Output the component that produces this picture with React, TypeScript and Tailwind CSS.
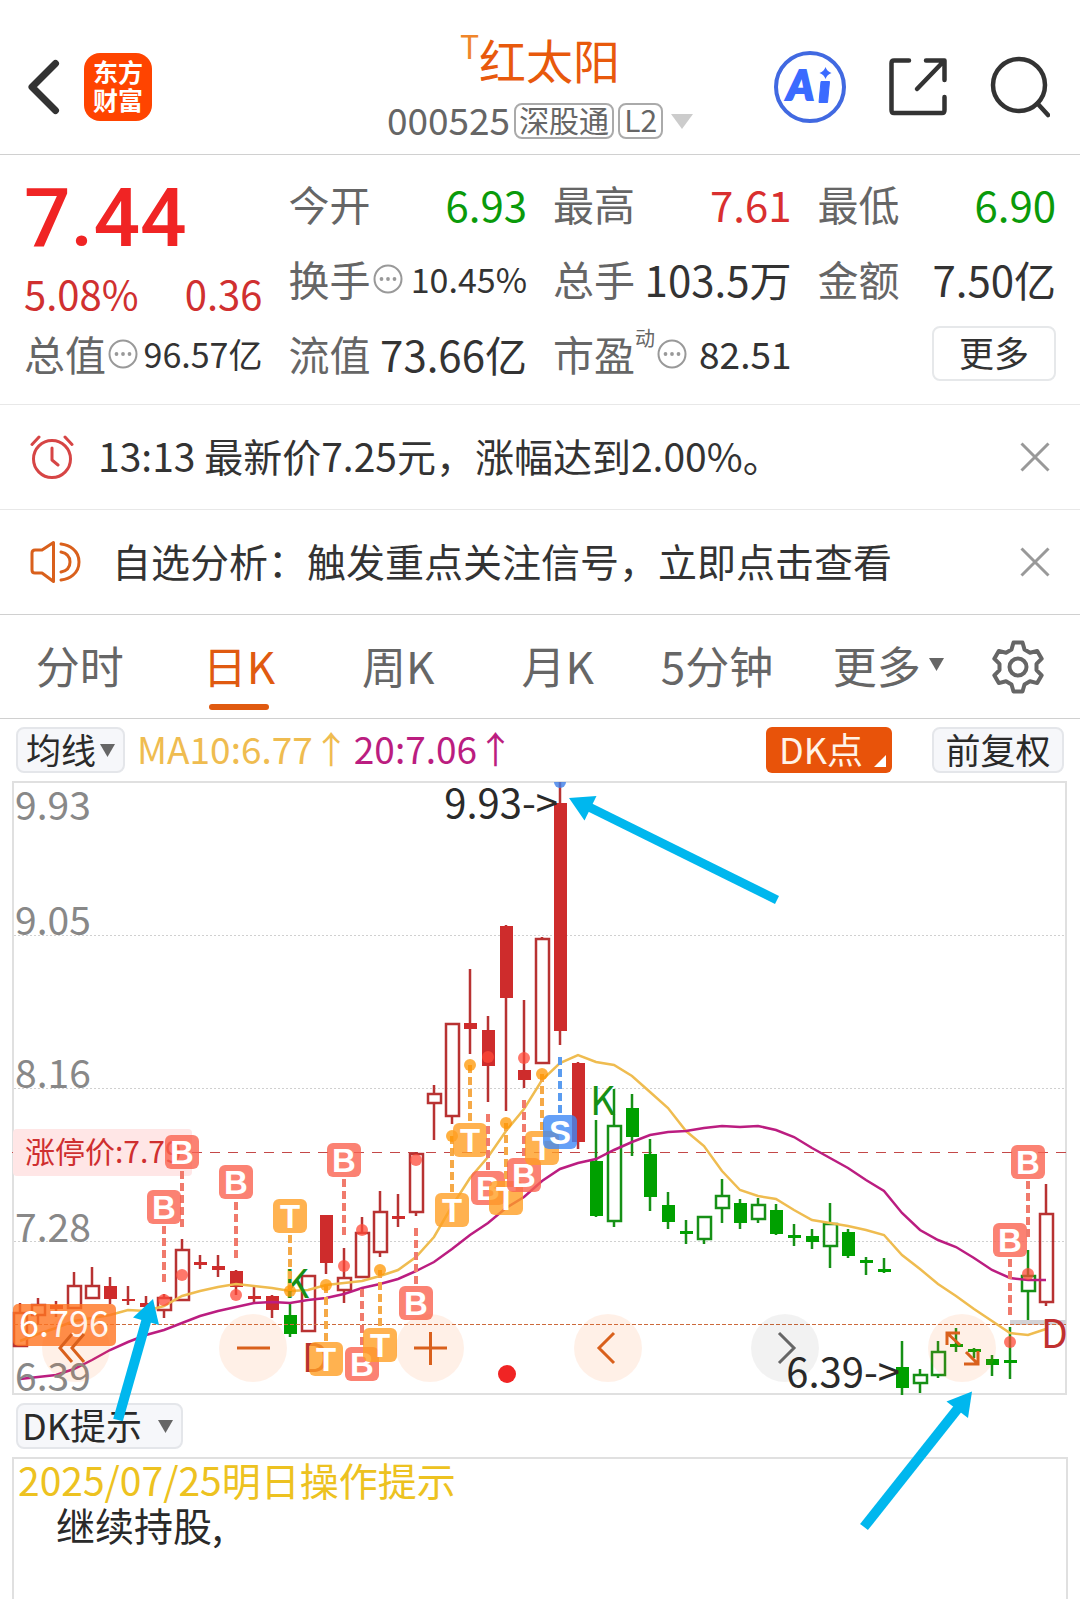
import React, { useState } from "react";

type Candle = [kind: string, high: number, top: number, bottom: number, low: number];

// kind: r/g = red or green body, R/G = hollow body
const candles: Candle[] = [
  ["R", 1303, 1312, 1346, 1347], ["R", 1298, 1304, 1315, 1325], ["r", 1301, 1305, 1309, 1317],
  ["R", 1272, 1285, 1308, 1308], ["R", 1267, 1285, 1298, 1298], ["r", 1277, 1286, 1299, 1304],
  ["r", 1286, 1299, 1301, 1305], ["r", 1296, 1303, 1307, 1311], ["R", 1294, 1297, 1310, 1318],
  ["R", 1239, 1249, 1300, 1301], ["r", 1255, 1262, 1265, 1269], ["r", 1255, 1266, 1270, 1277],
  ["r", 1270, 1271, 1287, 1295], ["r", 1287, 1296, 1299, 1303], ["r", 1295, 1296, 1310, 1318],
  ["g", 1304, 1315, 1334, 1337], ["R", 1275, 1275, 1331, 1331], ["r", 1215, 1215, 1263, 1274],
  ["R", 1248, 1277, 1290, 1303], ["R", 1217, 1232, 1277, 1277], ["R", 1191, 1211, 1252, 1257],
  ["r", 1194, 1216, 1219, 1227], ["R", 1152, 1153, 1212, 1216], ["R", 1085, 1093, 1103, 1140],
  ["R", 1023, 1023, 1116, 1124], ["r", 969, 1023, 1029, 1054], ["r", 1016, 1030, 1066, 1102],
  ["r", 925, 926, 998, 1111], ["r", 1000, 1070, 1080, 1088], ["R", 937, 938, 1063, 1063],
  ["r", 782, 803, 1031, 1045], ["r", 1062, 1063, 1142, 1149], ["g", 1120, 1161, 1216, 1217],
  ["G", 1089, 1125, 1221, 1227], ["g", 1094, 1108, 1137, 1156], ["g", 1139, 1154, 1197, 1211],
  ["g", 1192, 1205, 1222, 1229], ["g", 1220, 1231, 1234, 1244], ["G", 1216, 1216, 1239, 1244],
  ["G", 1179, 1195, 1208, 1223], ["g", 1199, 1203, 1223, 1229], ["G", 1198, 1204, 1219, 1223],
  ["g", 1204, 1210, 1234, 1235], ["g", 1224, 1235, 1238, 1246], ["g", 1229, 1236, 1242, 1249],
  ["G", 1203, 1223, 1246, 1268], ["g", 1229, 1232, 1256, 1258], ["g", 1257, 1260, 1263, 1275],
  ["g", 1258, 1269, 1272, 1273], ["g", 1341, 1367, 1388, 1395], ["G", 1369, 1374, 1383, 1393],
  ["G", 1341, 1351, 1375, 1378], ["g", 1328, 1344, 1347, 1352], ["g", 1348, 1349, 1352, 1358],
  ["g", 1355, 1359, 1365, 1376], ["g", 1327, 1360, 1363, 1379], ["G", 1250, 1275, 1291, 1320],
  ["R", 1184, 1213, 1302, 1306],
];

const ma10 = [
  1341, 1334, 1328, 1321, 1318, 1315, 1310, 1311, 1306, 1296, 1291, 1287, 1284, 1286, 1288, 1291, 1290, 1285, 1283,
  1281, 1276, 1270, 1257, 1237, 1206, 1178, 1157, 1131, 1109, 1080, 1063, 1055, 1062, 1065, 1076, 1092, 1108, 1131,
  1146, 1171, 1190, 1196, 1199, 1210, 1220, 1223, 1226, 1230, 1235, 1255, 1269, 1284, 1296, 1309, 1321, 1333, 1335, 1329,
];

const ma20 = [
  1379, 1377, 1375, 1369, 1360, 1350, 1342, 1335, 1330, 1323, 1316, 1311, 1307, 1303, 1302, 1303, 1300, 1298, 1294,
  1288, 1284, 1279, 1271, 1262, 1249, 1235, 1223, 1208, 1197, 1181, 1169, 1163, 1159, 1150, 1142, 1135, 1132, 1131,
  1128, 1126, 1127, 1126, 1130, 1137, 1148, 1158, 1168, 1180, 1191, 1213, 1230, 1240, 1247, 1258, 1270, 1278, 1280, 1280,
];

// B = buy, T = T+0 trade, S = sell
const signals = [
  { type: "B", x: 182, y: 1152, from: 1171, dot: 1275 },
  { type: "B", x: 164, y: 1207, from: 1226, dot: 1300 },
  { type: "B", x: 236, y: 1182, from: 1202, dot: 1295 },
  { type: "T", x: 290, y: 1216, from: 1235, dot: 1291 },
  { type: "B", x: 344, y: 1160, from: 1179, dot: 1266 },
  { type: "T", x: 326, y: 1359, from: 1285, dot: 1285 },
  { type: "B", x: 362, y: 1364, from: 1289, dot: 1230 },
  { type: "T", x: 380, y: 1345, from: 1270, dot: 1270 },
  { type: "B", x: 416, y: 1303, from: 1228, dot: 1160 },
  { type: "T", x: 452, y: 1210, from: 1136, dot: 1136 },
  { type: "T", x: 470, y: 1140, from: 1065, dot: 1065 },
  { type: "B", x: 488, y: 1188, from: 1114, dot: 1057 },
  { type: "T", x: 506, y: 1198, from: 1123, dot: 1123 },
  { type: "B", x: 524, y: 1175, from: 1100, dot: 1058 },
  { type: "T", x: 542, y: 1148, from: 1074, dot: 1074 },
  { type: "S", x: 560, y: 1132, from: 1057, dot: 782 },
  { type: "B", x: 1010, y: 1240, from: 1259, dot: 1342 },
  { type: "B", x: 1028, y: 1162, from: 1181, dot: 1274 },
];

const signalColors: Record<string, { box: string; line: string; dot: string }> = {
  B: { box: "#fa6350", line: "#f07a6c", dot: "#ff4a38" },
  T: { box: "#ff9f24", line: "#f5a947", dot: "#ff9500" },
  S: { box: "#3f88f5", line: "#5a9cf0", dot: "#3d7ee8" },
};

const xAt = (i: number) => 20 + i * 18;
const toPoints = (ys: number[]) => ys.map((y, i) => `${xAt(i)},${y}`).join(" ");

const periods = ["分时", "日K", "周K", "月K", "5分钟"];

const Dots = () => (
  <svg width="30" height="30" viewBox="0 0 30 30" className="ml-[2px] shrink-0">
    <circle cx="15" cy="15" r="13.5" fill="none" stroke="#999" strokeWidth="2" />
    <circle cx="8.5" cy="15" r="1.9" fill="#999" />
    <circle cx="15" cy="15" r="1.9" fill="#999" />
    <circle cx="21.5" cy="15" r="1.9" fill="#999" />
  </svg>
);

const Caret = ({ color = "#666" }: { color?: string }) => (
  <svg width="15" height="13" viewBox="0 0 15 13" className="shrink-0">
    <path d="M0 0h15L7.5 13z" fill={color} />
  </svg>
);

const CloseIcon = () => (
  <svg width="30" height="30" viewBox="0 0 30 30" fill="none" stroke="#999" strokeWidth="3">
    <path d="M1.5 1.5l27 27M28.5 1.5l-27 27" />
  </svg>
);

interface QuoteProps {
  label: string;
  value: string;
  color?: string;
  size?: string;
  info?: boolean;
  sup?: string;
}

const Quote = ({ label, value, color = "text-[#333]", size = "text-[42px]", info, sup }: QuoteProps) => (
  <div className="flex h-[75px] items-center justify-between whitespace-nowrap">
    <span className="flex items-center text-[41px] text-[#666]">
      {label}
      {sup && <sup className="-top-4 text-[20px] leading-none">{sup}</sup>}
      {info && <Dots />}
    </span>
    <span className={`${size} ${color}`}>{value}</span>
  </div>
);

const Header = () => (
  <header className="grid h-[155px] grid-cols-[1fr_auto_1fr] items-center border-b border-[#d0d0d0] px-7 pt-5">
    <div className="flex items-center gap-6">
      <button type="button" aria-label="返回">
        <svg width="32" height="56" viewBox="0 0 32 56" fill="none" stroke="#333" strokeWidth="7" strokeLinecap="round" strokeLinejoin="round">
          <path d="M27.500 4.500L4 28l23.500 23.500" />
        </svg>
      </button>
      <a href="#" className="flex size-[68px] flex-col items-center justify-center rounded-2xl bg-[#ff4400] pb-1 text-[25px] leading-7 font-bold text-white">
        <span>东方</span>
        <span>财富</span>
      </a>
    </div>

    <div className="flex flex-col items-center gap-1 pt-2 text-[#666]">
      <h1 className="flex text-[47px] leading-[56px] text-[#e8590c]">
        <span className="text-[32px] leading-7 text-[#f0862a]">T</span>
        红太阳
      </h1>
      <div className="flex items-center gap-1 text-[37px] leading-[56px]">
        <span className="pb-1">000525</span>
        <span className="rounded-lg border-2 border-[#aaa] px-[3px] pb-1 text-[30px] leading-7">深股通</span>
        <span className="rounded-lg border-2 border-[#aaa] px-1 pb-1 text-[30px] leading-7">L2</span>
        <svg width="22" height="15" viewBox="0 0 22 15" className="ml-1">
          <path d="M0 0h22L11 15z" fill="#ccc" />
        </svg>
      </div>
    </div>

    <div className="flex items-center justify-end gap-[42px] pr-[2px]">
      <button type="button" aria-label="AI">
        <svg width="72" height="72" viewBox="0 0 72 72">
          <circle cx="36" cy="36" r="34" fill="none" stroke="#4169e1" strokeWidth="4" />
          <text x="13" y="49" fontSize="41" fontWeight="900" fontStyle="italic" fill="#3b6bff" stroke="#3b6bff" strokeWidth="2" style={{ fontFamily: "Lato" }}>
            A
          </text>
          <path d="M47 30.500h8.500l-2 21h-8.500z" fill="#3b6bff" stroke="#3b6bff" strokeWidth="1" strokeLinejoin="round" />
          <path d="M51.500 16q1.500 4.500 6 6-4.500 1.500-6 6-1.500-4.500-6-6 4.500-1.500 6-6z" fill="#3b6bff" />
        </svg>
      </button>
      <button type="button" aria-label="分享">
        <svg width="60" height="60" viewBox="0 0 60 60" fill="none" stroke="#333" strokeWidth="4.500" strokeLinecap="round" strokeLinejoin="round">
          <path d="M21 3.500H6Q3.500 3.500 3.500 6v47q0 3 2.500 3h48q2.500 0 2.500-3V40M38 3.500h18.500V23M55 5L29 32" />
        </svg>
      </button>
      <button type="button" aria-label="搜索">
        <svg width="60" height="62" viewBox="0 0 60 62" fill="none" stroke="#333" strokeWidth="4.500" strokeLinecap="round">
          <circle cx="29" cy="29" r="26" />
          <path d="M47.500 47.500L58 59" />
        </svg>
      </button>
    </div>
  </header>
);

const QuotePanel = () => (
  <section className="grid grid-cols-4 gap-x-[26px] border-b border-[#e8e8e8] px-6 pt-[11px] pb-[13px]">
    <div>
      <div className="font-[Roboto,sans-serif] text-[82px] leading-[104px] font-medium text-[#f02424]">7.44</div>
      <div className="flex justify-between text-[40px] leading-[46px] text-[#d03030]">
        <span>5.08%</span>
        <span>0.36</span>
      </div>
      <Quote label="总值" value="96.57亿" size="text-[34px]" info />
    </div>
    <div>
      <Quote label="今开" value="6.93" color="text-[#0a9a0a]" />
      <Quote label="换手" value="10.45%" size="text-[34px]" info />
      <Quote label="流值" value="73.66亿" />
    </div>
    <div>
      <Quote label="最高" value="7.61" color="text-[#d92f2f]" />
      <Quote label="总手" value="103.5万" />
      <Quote label="市盈" value="82.51" size="text-[37px]" info sup="动" />
    </div>
    <div>
      <Quote label="最低" value="6.90" color="text-[#0a9a0a]" />
      <Quote label="金额" value="7.50亿" />
      <div className="flex h-[75px] items-center justify-end">
        <button type="button" className="h-[55px] w-[124px] rounded-lg border-2 border-[#e6e8ea] pb-1 text-[35px] leading-none text-[#333]">
          更多
        </button>
      </div>
    </div>
  </section>
);

const AlarmIcon = () => (
  <svg width="44" height="44" viewBox="0 0 44 44" fill="none" stroke="#d64545" strokeWidth="3" strokeLinecap="round" strokeLinejoin="round">
    <circle cx="22" cy="24" r="18.500" />
    <path d="M22 13v12l6 5M2 9.500L9 2M42 9.500L35 2" />
  </svg>
);

const SpeakerIcon = () => (
  <svg width="52" height="44" viewBox="0 0 52 44" fill="none" stroke="#d9601c" strokeWidth="3" strokeLinecap="round" strokeLinejoin="round">
    <path d="M23.500 2.500v39L12 33H5q-3 0-3-3V13q0-3 3-3h7zM31 4c8 1 18 6 18 18s-10 17-18 18M31 12c5 1 9 4 9 10s-4 9-9 10" />
  </svg>
);

const CandleChart = () => (
  <svg viewBox="12 781 1056 614" className="pointer-events-none relative z-10 block h-auto w-full overflow-visible">
    <rect x="13" y="782" width="1053" height="612" fill="none" stroke="#e0e0e0" strokeWidth="2" />

    {/* Grid */}
    {[935, 1088, 1241].map((y) => (
      <line key={y} x1="14" x2="1065" y1={y + 0.5} y2={y + 0.5} stroke="#d0d0d0" strokeDasharray="2 2" />
    ))}

    {/* Limit-up price */}
    <line x1="12" x2="1066" y1="1152.5" y2="1152.5" stroke="#c44848" strokeDasharray="10 8" />
    <rect x="13" y="1129" width="179" height="47" rx="4" fill="#ffe6e6" />
    <text x="25" y="1163" fontSize="30" fill="#cf2f2f">涨停价:7.79</text>

    {/* Candles */}
    {candles.map(([kind, high, top, bottom, low], i) => {
      const x = xAt(i);
      const isRed = kind.toLowerCase() === "r";
      const hollow = kind === kind.toUpperCase();
      const line = isRed ? "#b83232" : "#169016";
      return (
        <g key={i} stroke={line} strokeWidth="2.500">
          <path d={`M${x} ${high}V${top}M${x} ${bottom}V${low}`} />
          {hollow ? (
            <rect x={x - 6} y={top + 1} width="13" height={bottom - top - 1} fill="none" />
          ) : (
            <rect x={x - 6} y={top} width="13" height={bottom - top} fill={isRed ? "#ce2c2c" : "#00a000"} stroke="none" />
          )}
        </g>
      );
    })}

    <rect x="1010" y="1320" width="56" height="5" fill="#d2d2d6" />
    <line x1="14" x2="1066" y1="1324.5" y2="1324.5" stroke="#cc6a3c" strokeDasharray="4 2" />

    <polyline points={toPoints(ma10)} fill="none" stroke="#efbc50" strokeWidth="2.500" />
    <polyline points={toPoints(ma20)} fill="none" stroke="#bb1d80" strokeWidth="2.500" />

    {/* DK marks */}
    <g fontSize="39">
      <text x="590" y="1115" fill="#169016">K</text>
      <text x="284" y="1298" fill="#169016">K</text>
      <text x="302" y="1372" fill="#b83232">D</text>
      <text x="1041" y="1348" fill="#c03030">D</text>
    </g>

    {/* Trade signals */}
    {signals.map((s) => (
      <g key={s.x}>
        <line x1={s.x} x2={s.x} y1={s.from} y2={s.from + 56} stroke={signalColors[s.type].line} strokeWidth="4" strokeDasharray="8 4" />
        {s.type === "S" ? (
          <path d={`M${s.x - 6} 782h12a6 6 0 0 1-12 0z`} fill={signalColors.S.dot} opacity="0.8" />
        ) : (
          <circle cx={s.x} cy={s.dot} r="6" fill={signalColors[s.type].dot} opacity="0.75" />
        )}
        <rect x={s.x - 17} y={s.y - 17} width="34" height="34" rx="6" fill={signalColors[s.type].box} opacity="0.8" />
        <text x={s.x} y={s.y + 12} fontSize="33" fontWeight="700" textAnchor="middle" fill="#fff" style={{ fontFamily: "Liberation Sans" }}>
          {s.type}
        </text>
      </g>
    ))}

    {/* Current price */}
    <rect x="13" y="1304" width="103" height="42" rx="5" fill="#ff7420" opacity="0.8" />
    <text x="19" y="1337" fontSize="36" fill="#fff">6.796</text>

    <g fontSize="39" fill="#888">
      <text x="15" y="820">9.93</text>
      <text x="15" y="935">9.05</text>
      <text x="15" y="1088">8.16</text>
      <text x="15" y="1242">7.28</text>
      <text x="15" y="1391">6.39</text>
    </g>
    <g fontSize="40" fill="#2a2a2a" textAnchor="end">
      <text x="558" y="818">9.93-&gt;</text>
      <text x="900" y="1387">6.39-&gt;</text>
    </g>

    <circle cx="507" cy="1374" r="9" fill="#f02424" />

    {/* Pointer arrows */}
    <g fill="#00b7ee" stroke="#00b7ee">
      <path d="M569 798l27.500-2-12 24.500z" stroke="none" />
      <path d="M590 807.500L777 900" strokeWidth="9" />
      <path d="M153 1299l-20 18.500 26 7.500z" stroke="none" />
      <path d="M146.500 1320L118 1420" strokeWidth="10" />
      <path d="M972 1391.500l-25.500 10L968 1418z" stroke="none" />
      <path d="M957.500 1409L864 1527" strokeWidth="10" />
    </g>
  </svg>
);

const controls = [
  { label: "最早", d: "M30 20L18 34l12 14M42 20L30 34l12 14" },
  { label: "缩小", d: "M18 34h33" },
  { label: "放大", d: "M18 34h33M34.500 18v33" },
  { label: "向前", d: "M40 19L25 34l15 15" },
  { label: "向后", d: "M28 19l15 15-15 15", disabled: true },
  { label: "全屏", d: "M19 31V19h13M19 19l13 12M38 38l12 12M50 37v13H36" },
];

const App = () => {
  const [period, setPeriod] = useState("日K");
  const [showAlarm, setShowAlarm] = useState(true);
  const [showTip, setShowTip] = useState(true);

  return (
    <div className="min-h-screen overflow-x-hidden bg-white font-['Noto_Sans_CJK_SC',sans-serif] text-[#333]">
      <Header />
      <QuotePanel />

      {showAlarm && (
        <div className="flex h-[105px] items-center gap-6 border-b border-[#e8e8e8] px-[30px] text-[39px]">
          <AlarmIcon />
          <p className="flex-1 pb-1">13:13 最新价7.25元，涨幅达到2.00%。</p>
          <button type="button" aria-label="关闭提醒" onClick={() => setShowAlarm(false)}>
            <CloseIcon />
          </button>
        </div>
      )}
      {showTip && (
        <div className="flex h-[105px] items-center gap-[30px] border-b border-[#d0d0d0] px-[30px] text-[39px]">
          <SpeakerIcon />
          <p className="flex-1 pb-1">自选分析：触发重点关注信号，立即点击查看</p>
          <button type="button" aria-label="关闭分析" onClick={() => setShowTip(false)}>
            <CloseIcon />
          </button>
        </div>
      )}

      {/* Period tabs */}
      <nav className="grid h-[104px] grid-cols-[repeat(6,minmax(0,1fr))_124px] border-b border-[#d0d0d0] text-[44px] text-[#666]">
        {periods.map((p) => (
          <button
            key={p}
            type="button"
            onClick={() => setPeriod(p)}
            className={`relative pb-1 whitespace-nowrap ${period === p ? "text-[#e05a10]" : ""}`}
          >
            {p}
            {period === p && <span className="absolute bottom-2 left-1/2 h-[6px] w-[60px] -translate-x-1/2 rounded-full bg-[#e05a10]" />}
          </button>
        ))}
        <button type="button" className="flex items-center justify-center gap-2 pb-1 pl-6 whitespace-nowrap">
          更多
          <Caret />
        </button>
        <button type="button" aria-label="设置" className="flex items-center justify-center">
          <svg width="52" height="54" viewBox="0 0 52 54" fill="none" stroke="#666" strokeWidth="4" strokeLinejoin="round">
            <path d="M21.500 2.500h9l2 7 5.500 3.200 7.200-1.800 4.500 7.800-5.200 5.200v6.200l5.200 5.200-4.500 7.800-7.200-1.800-5.500 3.200-2 7h-9l-2-7-5.500-3.200-7.200 1.800-4.500-7.800 5.200-5.200v-6.200l-5.200-5.200 4.500-7.800 7.200 1.800 5.500-3.200z" />
            <circle cx="26" cy="27" r="8.500" />
          </svg>
        </button>
      </nav>

      {/* Moving averages */}
      <div className="flex h-[62px] items-center px-4 text-[37px] leading-none whitespace-nowrap">
        <button type="button" className="flex h-[46px] items-center gap-1 rounded-lg border-2 border-[#e4e6ea] bg-[#f6f7fa] px-2 text-[35px] text-[#2a2a2a]">
          <span className="pb-1">均线</span>
          <Caret />
        </button>
        <span className="ml-3 pb-1 text-[#efbc50]">MA10:6.77↑</span>
        <span className="ml-1 pb-1 text-[#bb1d80]">20:7.06↑</span>
        <button type="button" className="relative ml-auto h-[46px] w-[126px] rounded-md bg-[#e8530a] pr-4 pb-1 text-[36px] text-[#fff3e8]">
          DK点
          <svg width="12" height="12" viewBox="0 0 12 12" className="absolute right-[6px] bottom-[6px]">
            <path d="M12 0v12H0z" fill="#fff" />
          </svg>
        </button>
        <button type="button" className="ml-10 h-[46px] w-[132px] rounded-lg border-2 border-[#e4e6ea] bg-[#f6f7fa] pb-1 text-[35px] text-[#2a2a2a]">
          前复权
        </button>
      </div>

      <main className="px-3">
        <div className="relative">
          <CandleChart />
          <div className="absolute right-[72px] bottom-[13px] left-[30px] z-20 flex justify-between">
            {controls.map((c) => (
              <button
                key={c.label}
                type="button"
                aria-label={c.label}
                disabled={c.disabled}
                className={`size-[68px] rounded-full ${c.disabled ? "bg-black/5 text-[#666]" : "bg-[#ff6a13]/10 text-[#d9601c]"}`}
              >
                <svg viewBox="0 0 68 68" fill="none" stroke="currentColor" strokeWidth="3">
                  <path d={c.d} />
                </svg>
              </button>
            ))}
          </div>
        </div>

        <div className="flex h-[62px] items-center px-1">
          <button type="button" className="flex h-[46px] items-center gap-4 rounded-lg border-2 border-[#e4e6ea] bg-[#f6f7fa] px-1 pr-2 text-[36px] leading-none text-[#2a2a2a]">
            <span className="pb-1">DK提示</span>
            <Caret />
          </button>
        </div>

        <section className="h-36 border-2 border-b-0 border-[#e0e0e0] px-1 text-[39px]">
          <h2 className="leading-10 text-[#edc220]">2025/07/25明日操作提示</h2>
          <p className="px-[38px] leading-[50px] text-[#2a2a2a]">继续持股,</p>
        </section>
      </main>
    </div>
  );
};

export default App;
